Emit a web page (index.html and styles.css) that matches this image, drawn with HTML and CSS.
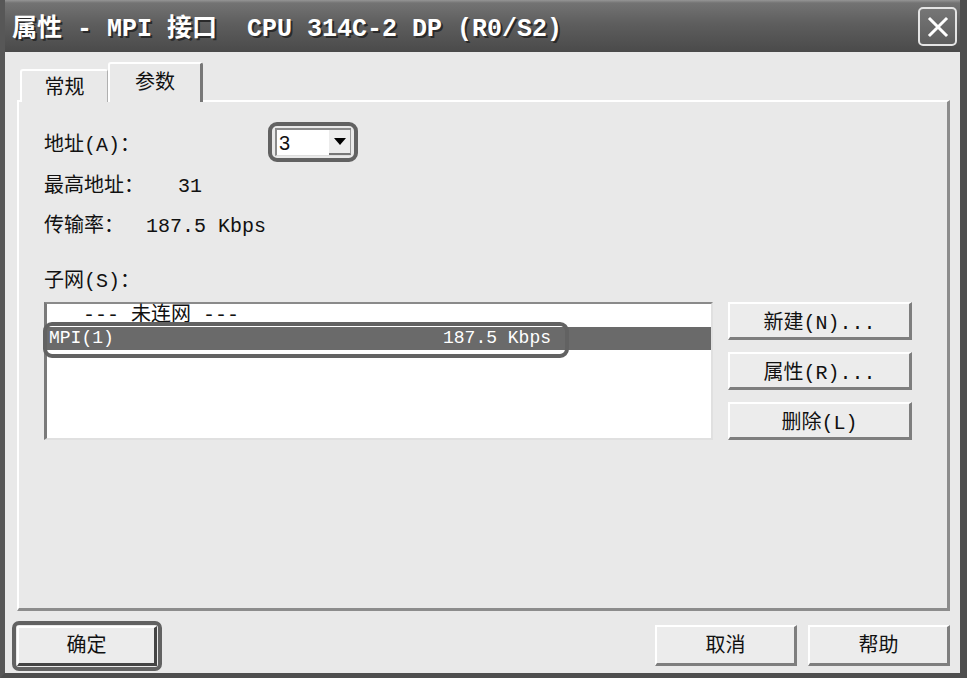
FILE: index.html
```html
<!DOCTYPE html>
<html lang="zh-CN">
<head>
    <meta charset="UTF-8">
    <title>属性 - MPI 接口</title>
    <link rel="stylesheet" href="styles.css">
</head>
<body>
    <div class="window">
        <div class="titlebar">
            <span class="title">属性 - MPI 接口  CPU 314C-2 DP (R0/S2)</span>
            <div class="close">
                <svg width="26" height="26" viewBox="0 0 26 26">
                    <path d="M5 5 L21 21 M21 5 L5 21" stroke="#fff" stroke-width="3" stroke-linecap="square"/>
                </svg>
            </div>
        </div>

        <div class="tabarea">
            <div class="tabs">
                <div class="tab">常规</div>
                <div class="tab active">参数</div>
            </div>

            <div class="panel">
                <div class="field-row">
                    <span class="label">地址(A)：</span>
                    <div class="mark combo-mark">
                        <div class="combo">
                            <span class="combo-value">3</span>
                            <span class="combo-btn">
                                <svg width="12" height="7" viewBox="0 0 12 7"><path d="M0 0 H12 L6 7 Z" fill="#000"/></svg>
                            </span>
                        </div>
                    </div>
                </div>
                <div class="info-row max-addr">最高地址：<span class="val val-max">31</span></div>
                <div class="info-row rate">传输率：<span class="val val-rate">187.5 Kbps</span></div>

                <div class="info-row subnet-label">子网(S)：</div>
                <div class="subnet">
                    <div class="listbox">
                        <div class="list-item none">--- 未连网 ---</div>
                        <div class="list-item selected">
                            <span class="net-name">MPI(1)</span>
                            <span class="net-rate">187.5 Kbps</span>
                        </div>
                        <div class="mark row-mark"></div>
                    </div>
                    <div class="side-buttons">
                        <button class="btn">新建(N)...</button>
                        <button class="btn">属性(R)...</button>
                        <button class="btn">删除(L)</button>
                    </div>
                </div>
            </div>
        </div>

        <div class="footer">
            <div class="mark ok-mark">
                <button class="btn ok">确定</button>
            </div>
            <div class="footer-right">
                <button class="btn wide">取消</button>
                <button class="btn wide">帮助</button>
            </div>
        </div>
    </div>
</body>
</html>
```

FILE: styles.css
```css
* {
    box-sizing: border-box;
}
body {
    margin: 0;
    background-color: #e9e9e9;
    font-family: "Liberation Mono", "Noto Sans CJK SC", monospace;
    font-size: 20px;
    color: #111;
}
.window {
    width: 967px;
    height: 678px;
    display: flex;
    flex-direction: column;
    border-left: 5px solid #575757;
    border-right: 7px solid #4e4e4e;
    border-bottom: 5px solid #4e4e4e;
    background-color: #e9e9e9;
}
.titlebar {
    height: 52px;
    flex: none;
    display: flex;
    align-items: center;
    justify-content: space-between;
    padding: 0 3px 2px 7px;
    background: linear-gradient(#959595 0, #737373 3px, #5e5e5e 45%, #4a4a4a 100%);
}
.title {
    white-space: pre;
    font-size: 25px;
    font-weight: bold;
    color: #fff;
    text-shadow: 2px 2px 0 #2a2a2a;
}
.close {
    width: 39px;
    height: 39px;
    border: 2px solid #e4e4e4;
    border-radius: 5px;
    background: linear-gradient(#767676, #5e5e5e);
    display: flex;
    align-items: center;
    justify-content: center;
    margin-top: 3px;
}

/* tabs + panel */
.tabarea {
    padding: 10px 10px 0 12px;
}
.tabs {
    display: flex;
    align-items: flex-end;
    padding-left: 3px;
    height: 38px;
}
.tab {
    height: 33px;
    width: 88px;
    display: flex;
    align-items: center;
    justify-content: center;
    background-color: #e9e9e9;
    border-top: 2px solid #fff;
    border-left: 2px solid #fff;
    border-right: 1px solid #b0b0b0;
    border-radius: 3px 3px 0 0;
    margin-bottom: -2px;
    padding-bottom: 2px;
    position: relative;
}
.tab.active {
    width: 95px;
    height: 40px;
    border-right: 3px solid #777;
    padding-bottom: 6px;
    z-index: 1;
}
.panel {
    height: 511px;
    border-top: 2px solid #fff;
    border-left: 2px solid #fff;
    border-right: 3px solid #8c8c8c;
    border-bottom: 3px solid #8c8c8c;
    padding: 20px 0 0 25px;
}

.mark {
    border: 4px solid #626262;
    border-radius: 9px;
}
.field-row {
    display: flex;
    align-items: center;
}
.label {
    width: 224px;
}
.combo-mark {
    width: 90px;
    height: 40px;
    padding: 2px 3px;
}
.combo {
    height: 100%;
    display: flex;
    background-color: #fff;
    border-top: 2px solid #8a8a8a;
    border-left: 2px solid #8a8a8a;
    border-bottom: 1px solid #ddd;
}
.combo-value {
    flex: 1;
    font-family: "Liberation Sans", sans-serif;
    font-size: 20px;
    line-height: 26px;
    padding-left: 2px;
}
.combo-btn {
    width: 22px;
    display: flex;
    align-items: center;
    justify-content: center;
    background-color: #ececec;
    border-bottom: 2px solid #777;
    border-right: 1px solid #999;
}
.info-row {
    white-space: pre;
    line-height: 24px;
}
.val-max {
    margin-left: 34px;
}
.val-rate {
    margin-left: 22px;
}
.max-addr {
    margin-top: 13px;
}
.rate {
    margin-top: 16px;
}
.subnet-label {
    margin-top: 31px;
}
.subnet {
    display: flex;
    margin-top: 8px;
}
.listbox {
    position: relative;
    width: 669px;
    height: 138px;
    background-color: #fff;
    border-top: 2px solid #8a8a8a;
    border-left: 3px solid #7a7a7a;
    border-right: 2px solid #e0e0e0;
    border-bottom: 2px solid #e0e0e0;
}
.list-item {
    height: 23px;
    line-height: 23px;
    white-space: pre;
}
.list-item.none {
    padding-left: 36px;
}
.list-item.selected {
    display: flex;
    background-color: #6a6a6a;
    color: #fff;
    padding-left: 2px;
    font-size: 18px;
}
.net-name {
    width: 394px;
}
.row-mark {
    position: absolute;
    left: -4px;
    top: 18px;
    width: 526px;
    height: 36px;
}
.side-buttons {
    display: flex;
    flex-direction: column;
    gap: 12px;
    margin-left: 15px;
}

.btn {
    font-family: inherit;
    font-size: 20px;
    color: #111;
    background-color: #ececec;
    border: none;
    border-top: 2px solid #fff;
    border-left: 2px solid #fff;
    border-right: 3px solid #7e7e7e;
    border-bottom: 3px solid #7e7e7e;
    width: 184px;
    height: 38px;
    padding: 0;
    white-space: pre;
}

.footer {
    display: flex;
    justify-content: space-between;
    align-items: flex-start;
    padding: 10px 10px 0 7px;
}
.ok-mark {
    width: 150px;
    height: 50px;
    padding: 1px;
    border-radius: 7px;
}
.btn.ok {
    width: 140px;
    height: 40px;
    border-right: 3px solid #444;
    border-bottom: 3px solid #444;
    padding-bottom: 4px;
}
.footer-right {
    display: flex;
    gap: 11px;
    padding-top: 4px;
}
.btn.wide {
    width: 142px;
    height: 41px;
    padding-bottom: 4px;
}
```
